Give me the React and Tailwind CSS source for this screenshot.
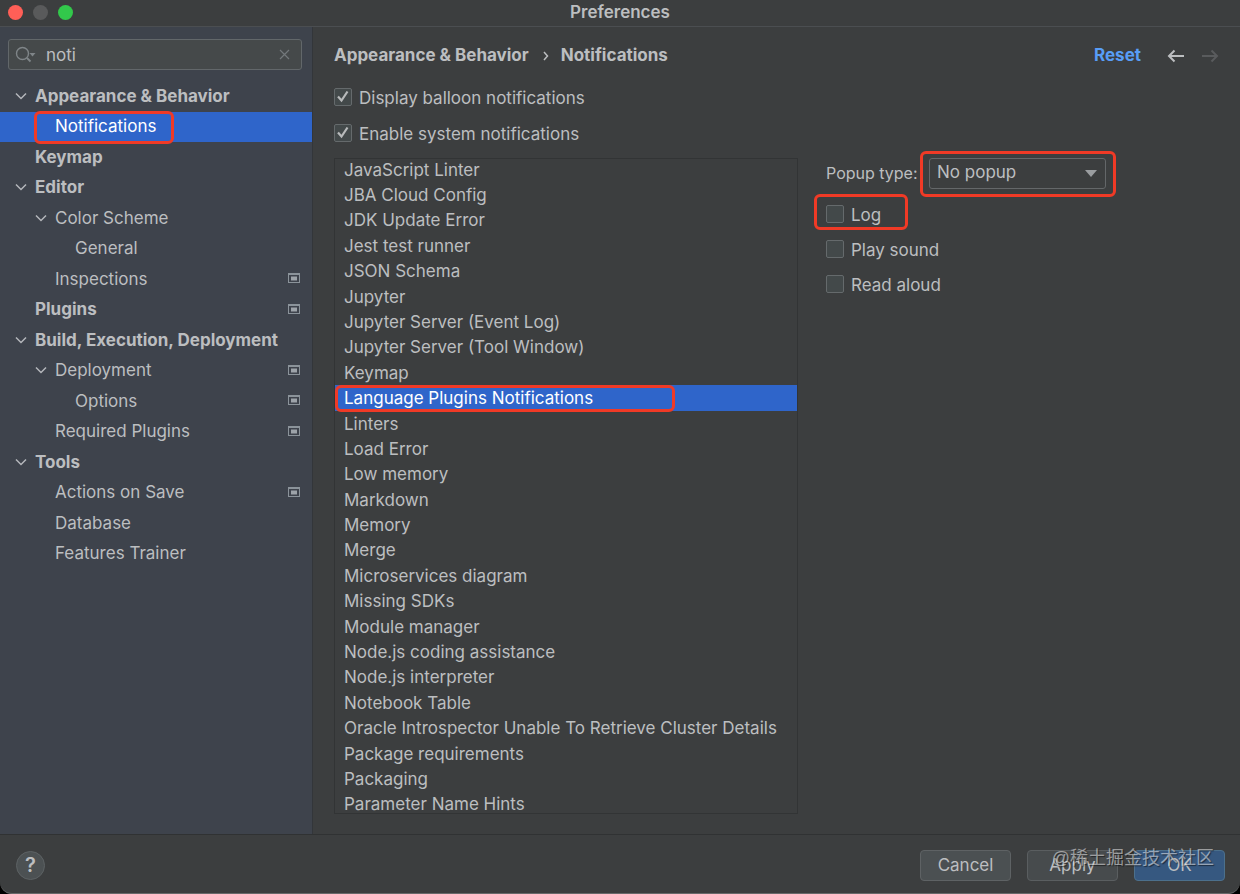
import { useState } from 'react'
import clsx from 'clsx'

const tree = [
  { label: 'Appearance & Behavior', level: 0, open: true },
  { label: 'Notifications', level: 1, selected: true },
  { label: 'Keymap', level: 0 },
  { label: 'Editor', level: 0, open: true },
  { label: 'Color Scheme', level: 1, open: true },
  { label: 'General', level: 2 },
  { label: 'Inspections', level: 1, project: true },
  { label: 'Plugins', level: 0, project: true },
  { label: 'Build, Execution, Deployment', level: 0, open: true },
  { label: 'Deployment', level: 1, open: true, project: true },
  { label: 'Options', level: 2, project: true },
  { label: 'Required Plugins', level: 1, project: true },
  { label: 'Tools', level: 0, open: true },
  { label: 'Actions on Save', level: 1, project: true },
  { label: 'Database', level: 1 },
  { label: 'Features Trainer', level: 1 },
]

const indents = ['pl-[14px]', 'pl-[34px]', 'pl-[54px]']

const groups = [
  'JavaScript Linter',
  'JBA Cloud Config',
  'JDK Update Error',
  'Jest test runner',
  'JSON Schema',
  'Jupyter',
  'Jupyter Server (Event Log)',
  'Jupyter Server (Tool Window)',
  'Keymap',
  'Language Plugins Notifications',
  'Linters',
  'Load Error',
  'Low memory',
  'Markdown',
  'Memory',
  'Merge',
  'Microservices diagram',
  'Missing SDKs',
  'Module manager',
  'Node.js coding assistance',
  'Node.js interpreter',
  'Notebook Table',
  'Oracle Introspector Unable To Retrieve Cluster Details',
  'Package requirements',
  'Packaging',
  'Parameter Name Hints',
]

function Chevron() {
  return (
    <svg className="w-[14px] h-[14px]" viewBox="0 0 14 14" fill="none" stroke="#b4b7bb" strokeWidth="1.5">
      <path d="M2 4.500l5 5 5-5" />
    </svg>
  )
}

function ProjectIcon() {
  return (
    <svg className="w-3 h-[11px] shrink-0" viewBox="0 0 12 11">
      <path d="M0 0h12v10H0zM1 2v7h10V2z" fill="#8b939a" fillRule="evenodd" />
      <path d="M3 3.500h6v4H3z" fill="#9da3a9" />
    </svg>
  )
}

function Marker({ className }) {
  return <span className={clsx('absolute border-[3px] border-[#f03a26] rounded-md pointer-events-none', className)} />
}

function Checkbox({ label, defaultChecked, children }) {
  return (
    <label className="relative flex items-center gap-[7px] w-fit h-[18px]">
      <span className="relative w-[18px] h-[18px] shrink-0">
        <input
          type="checkbox"
          defaultChecked={defaultChecked}
          className="peer block appearance-none w-[18px] h-[18px] rounded-[2px] border border-[#656a6c] bg-[#43494a]"
        />
        <svg
          className="absolute inset-0 hidden peer-checked:block pointer-events-none"
          viewBox="0 0 18 18"
          fill="none"
          stroke="#b8babb"
          strokeWidth="2.2"
        >
          <path d="M4 8.500l3.500 4L13.500 3.500" />
        </svg>
      </span>
      <span className="pt-0.5 leading-6">{label}</span>
      {children}
    </label>
  )
}

function Sidebar() {
  const [query, setQuery] = useState('noti')

  return (
    <aside className="w-[313px] shrink-0 bg-[#3e434c] border-r border-[#33363a] overflow-hidden">
      <div className="relative flex items-center mx-2 mr-[10px] mt-3 h-[31px] rounded-[3px] border border-[#62676a] bg-[#45494a]">
        <svg className="absolute left-[6px] w-6 h-5 pointer-events-none" viewBox="0 0 24 20" fill="none" stroke="#7f8588" strokeWidth="1.4">
          <circle cx="7.500" cy="8.500" r="6" />
          <path d="M12 13l3.500 3.500" strokeWidth="1.8" />
          <path d="M14.500 8h6l-3 3.500z" fill="#7f8588" stroke="none" />
        </svg>
        <input
          type="text"
          aria-label="Search settings"
          value={query}
          onChange={(e) => setQuery(e.target.value)}
          className="w-full h-full pl-[37px] pr-8 bg-transparent outline-none"
        />
        <button aria-label="Clear" onClick={() => setQuery('')} className="absolute right-[11px]">
          <svg className="w-[11px] h-[11px]" viewBox="0 0 11 11" stroke="#73787b" strokeWidth="1.2">
            <path d="M1 1l9 9M10 1l-9 9" />
          </svg>
        </button>
      </div>

      <ul className="grid auto-rows-fr h-[488px] mt-[11px]">
        {tree.map((item) => (
          <li
            key={item.label}
            className={clsx(
              'relative flex items-center pr-3 pb-px',
              indents[item.level],
              item.level === 0 && 'font-bold',
              item.selected && 'bg-[#2f65ca] text-white'
            )}
          >
            <span className="w-[21px] shrink-0">{item.open && <Chevron />}</span>
            <span className="flex-1 leading-6 whitespace-nowrap">{item.label}</span>
            {item.project && <ProjectIcon />}
            {item.selected && <Marker className="left-[34px] -top-px w-[140px] h-[33px]" />}
          </li>
        ))}
      </ul>
    </aside>
  )
}

export default function App() {
  const [selected, setSelected] = useState('Language Plugins Notifications')

  return (
    <div className="h-screen bg-black">
      <div className="relative flex flex-col h-full overflow-hidden rounded-b-xl border-b border-[#67696a] bg-[#3c3e3f] text-[#bcbec0] text-[17px] font-['Inter',sans-serif]">
        {/* Title bar */}
        <header className="relative flex items-center shrink-0 h-[27px] px-2 border-b border-[#4b4e51]">
          <div className="flex gap-[10px] pb-px">
            <span className="w-[15px] h-[15px] rounded-full bg-[#ff5f57]" />
            <span className="w-[15px] h-[15px] rounded-full bg-[#595a5b]" />
            <span className="w-[15px] h-[15px] rounded-full bg-[#32c84b]" />
          </div>
          <h1 className="absolute inset-x-0 pb-0.5 text-center font-semibold leading-6">Preferences</h1>
        </header>

        <div className="flex flex-1 min-h-0">
          <Sidebar />

          <main className="flex flex-col flex-1 min-w-0 pl-[21px] pr-[21px] pb-5">
            <div className="flex items-center h-[57px] shrink-0 font-bold">
              <span>Appearance &amp; Behavior</span>
              <svg className="w-[6px] h-[10px] ml-[14px] mr-3" viewBox="0 0 6 10" fill="none" stroke="#bcbec0" strokeWidth="1.5">
                <path d="M1 1l3.500 4L1 9" />
              </svg>
              <span>Notifications</span>
              <button className="ml-auto mr-[26px] font-bold text-[#589df6]">Reset</button>
              <button aria-label="Back" className="mr-4">
                <svg className="w-[18px] h-[14px]" viewBox="0 0 18 14" fill="none" stroke="#bcbec0" strokeWidth="2">
                  <path d="M17 7H2M7.500 1.500L2 7l5.500 5.500" />
                </svg>
              </button>
              <button aria-label="Forward" disabled>
                <svg className="w-[18px] h-[14px]" viewBox="0 0 18 14" fill="none" stroke="#595b5d" strokeWidth="2">
                  <path d="M1 7h15M10.500 1.500L16 7l-5.500 5.500" />
                </svg>
              </button>
            </div>

            <div className="flex flex-col gap-[18px] pt-1 pb-4 shrink-0">
              <Checkbox label="Display balloon notifications" defaultChecked />
              <Checkbox label="Enable system notifications" defaultChecked />
            </div>

            <div className="flex flex-1 min-h-0">
              <div className="w-[464px] overflow-y-auto [scrollbar-width:none] border border-[#323435]">
                <ul className="grid auto-rows-fr h-[660px] -mt-0.5">
                  {groups.map((g) => (
                    <li
                      key={g}
                      onClick={() => setSelected(g)}
                      className={clsx(
                        'relative flex items-center pl-[9px] leading-6 whitespace-nowrap',
                        g === selected && 'bg-[#2f65ca] text-white'
                      )}
                    >
                      {g}
                      {g === 'Language Plugins Notifications' && <Marker className="left-0 top-0 w-[340px] h-[27px]" />}
                    </li>
                  ))}
                </ul>
              </div>

              <div className="flex flex-col gap-[17px] pl-7">
                <div className="flex items-center h-[30px]">
                  <label htmlFor="popup-type" className="w-[103px] text-base whitespace-nowrap">Popup type:</label>
                  <div className="relative">
                    <select
                      id="popup-type"
                      className="block appearance-none w-[177px] h-[31px] pl-[7px] rounded-[3px] border border-[#646769] bg-[#3c3e3f]"
                    >
                      <option>No popup</option>
                      <option>Balloon</option>
                      <option>Sticky balloon</option>
                    </select>
                    <svg className="absolute right-[9px] top-3 w-3 h-[7px] pointer-events-none" viewBox="0 0 12 7" fill="#9a9da0">
                      <path d="M0 0h12L6 7z" />
                    </svg>
                    <Marker className="-left-[9px] -top-[7px] w-[196px] h-[46px]" />
                  </div>
                </div>
                <Checkbox label="Log">
                  <Marker className="-left-3 -top-[11px] w-[94px] h-9" />
                </Checkbox>
                <Checkbox label="Play sound" />
                <Checkbox label="Read aloud" />
              </div>
            </div>
          </main>
        </div>

        <footer className="relative flex items-center shrink-0 h-[59px] pt-0.5 pl-4 pr-[15px] border-t border-[#303233]">
          <button aria-label="Help" className="w-[29px] h-[29px] rounded-full border border-[#5d6264] bg-[#4c5153] text-xl leading-5 font-semibold">
            ?
          </button>
          <div className="flex gap-4 ml-auto">
            <button className="w-[91px] h-[31px] pt-px rounded-[4px] border border-[#5e6264] bg-[#4b5052]">Cancel</button>
            <button className="w-[91px] h-[31px] pt-px rounded-[4px] border border-[#5a5e60] bg-[#474b4d]">Apply</button>
            <button className="w-[91px] h-[31px] pt-px rounded-[4px] border border-[#4c708c] bg-[#365880]">OK</button>
          </div>
          <span className="absolute right-[26px] top-[9px] text-lg leading-7 text-white/50 pointer-events-none whitespace-nowrap font-['Liberation_Sans','Noto_Sans_CJK_SC',sans-serif] [text-shadow:1px_1px_1px_rgba(0,0,0,0.5)]">
            @稀土掘金技术社区
          </span>
        </footer>
      </div>
    </div>
  )
}
